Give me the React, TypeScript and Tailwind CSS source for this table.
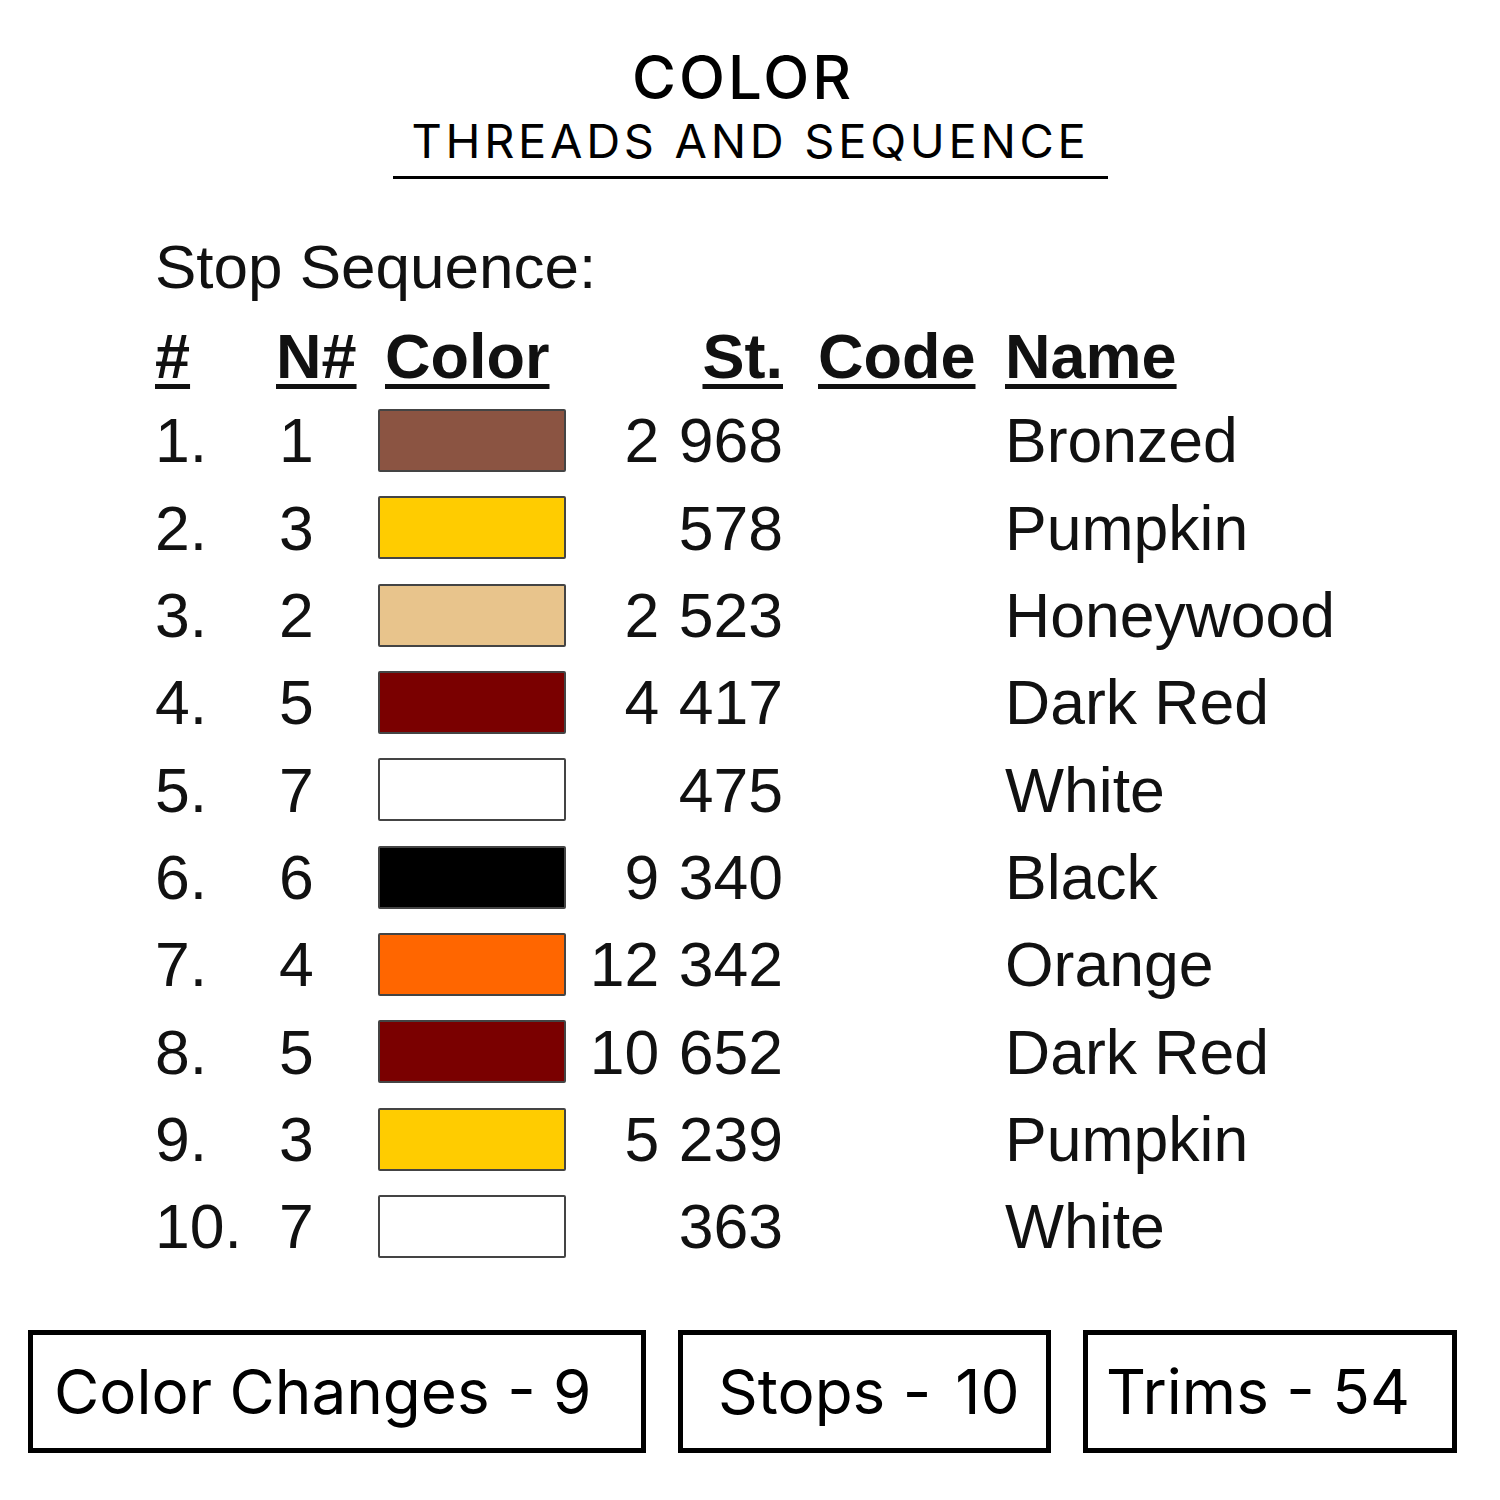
const rows = [
  { n: "1.", needle: "1", color: "bg-[#8b5442]", st: "2 968", name: "Bronzed" },
  { n: "2.", needle: "3", color: "bg-[#ffcc00]", st: "578", name: "Pumpkin" },
  { n: "3.", needle: "2", color: "bg-[#e8c48c]", st: "2 523", name: "Honeywood" },
  { n: "4.", needle: "5", color: "bg-[#7a0000]", st: "4 417", name: "Dark Red" },
  { n: "5.", needle: "7", color: "bg-white", st: "475", name: "White" },
  { n: "6.", needle: "6", color: "bg-black", st: "9 340", name: "Black" },
  { n: "7.", needle: "4", color: "bg-[#ff6600]", st: "12 342", name: "Orange" },
  { n: "8.", needle: "5", color: "bg-[#7a0000]", st: "10 652", name: "Dark Red" },
  { n: "9.", needle: "3", color: "bg-[#ffcc00]", st: "5 239", name: "Pumpkin" },
  { n: "10.", needle: "7", color: "bg-white", st: "363", name: "White" },
];

const cols = "grid grid-cols-[124px_99px_188px_217px_222px_1fr] items-center";

export default function App() {
  return (
    <div className="w-[1500px] h-[1500px] bg-white text-black flex flex-col">
      {/* Title */}
      <div className="flex flex-col items-center pt-[47px] font-['Inter',sans-serif]">
        <h1 className="text-[60px] leading-none font-medium tracking-[3px] -ml-[14px]">COLOR</h1>
        <h2 className="text-[47px] leading-none font-normal mt-[10px] tracking-[3.7px] pl-[1px]">
          THREADS AND SEQUENCE
        </h2>
        <div className="w-[715px] h-[3px] bg-black mt-[12px]" />
      </div>

      {/* Stop sequence table */}
      <div className="pl-[155px] mt-[57px] font-['Liberation_Sans',Arial,sans-serif] text-[62.5px] leading-none text-[#111]">
        <p className="h-[61px] text-[62px]">Stop Sequence:</p>
        <div className={`${cols} h-[81px] mt-[19px] font-bold underline decoration-[5px] underline-offset-[6px] text-[63px]`}>
          <span>#</span>
          <span className="-ml-[3px]">N#</span>
          <span className="pl-[7px]">Color</span>
          <span className="text-right">St.</span>
          <span className="pl-[35px]">Code</span>
          <span>Name</span>
        </div>
        {rows.map((r, i) => (
          <div key={i} className={`${cols} h-[87.33px]`}>
            <span>{r.n}</span>
            <span>{r.needle}</span>
            <div className={`${r.color} h-[63px] w-[188px] border-2 border-[#444] rounded-[2px]`} />
            <span className="text-right [word-spacing:2px]">{r.st}</span>
            <span />
            <span>{r.name}</span>
          </div>
        ))}
      </div>

      {/* Summary boxes */}
      <div className="flex gap-[32px] pl-[28px] mt-[60px] font-['Inter',sans-serif] text-[62px] leading-none">
        <div className="w-[618px] h-[123px] border-[5px] border-black flex items-center pl-[21px]">
          <span>Color Changes - 9</span>
        </div>
        <div className="w-[373px] h-[123px] border-[5px] border-black flex items-center pl-[35px]">
          <span>
            Stops -<span className="ml-[24px]">10</span>
          </span>
        </div>
        <div className="w-[374px] h-[123px] border-[5px] border-black flex items-center pl-[18px]">
          <span>Trims - 54</span>
        </div>
      </div>
    </div>
  );
}
